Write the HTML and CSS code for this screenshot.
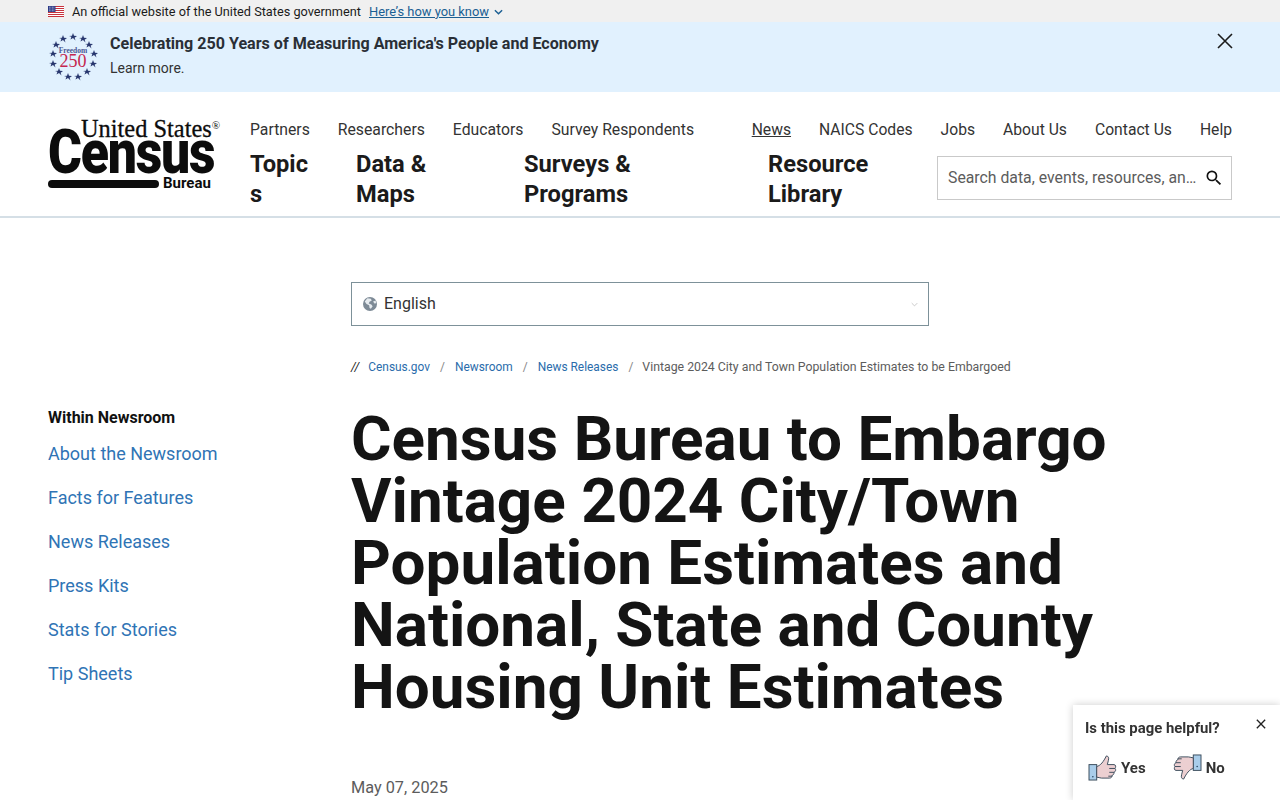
FILE: index.html
```html
<!DOCTYPE html>
<html lang="en">
<head>
<meta charset="utf-8">
<title>Census Bureau to Embargo Vintage 2024 City/Town Population Estimates</title>
<link rel="stylesheet" href="styles.css">
</head>
<body>
<div class="gov-banner">
  <svg class="flag" viewBox="0 0 16 11" width="16" height="11"><rect width="16" height="11" fill="#fff"/><path d="M0 .5h16M0 2.500h16M0 4.500h16M0 6.500h16M0 8.500h16M0 10.500h16" stroke="#c8323c" stroke-width="1"/><rect width="7.500" height="6" fill="#2b3a86"/><path d="M1 1.200h5.500M1 3h5.500M1 4.800h5.500" stroke="#dfe2f2" stroke-width=".8" stroke-dasharray=".8 .7"/></svg>
  <span class="gov-text">An official website of the United States government</span>
  <a class="gov-link" href="#">Here’s how you know</a>
  <svg class="gov-chev" viewBox="0 0 10 6" width="9" height="6"><path d="M1 1l4 4 4-4" fill="none" stroke="#1b5f93" stroke-width="1.600"/></svg>
</div>
<div class="alert">
  <svg class="seal" viewBox="0 0 50 50" width="50" height="50">
    <defs><path id="star" d="M0-4l1 2.800 3 .1-2.400 1.800.9 2.900L0 .9l-2.500 1.700.9-2.900L-4-1.100l3-.1z" fill="#27366e"/></defs>
    <use href="#star" x="25" y="5"/><use href="#star" x="15" y="7"/><use href="#star" x="35" y="7"/><use href="#star" x="8" y="13"/><use href="#star" x="41" y="13"/><use href="#star" x="5" y="22"/><use href="#star" x="46" y="22"/><use href="#star" x="5" y="32"/><use href="#star" x="45" y="32"/><use href="#star" x="11" y="40"/><use href="#star" x="39" y="40"/><use href="#star" x="20" y="45"/><use href="#star" x="30" y="45"/>
    <text class="seal-top" x="25" y="20.500" text-anchor="middle">Freedom</text>
    <text class="seal-num" x="25" y="34.500" text-anchor="middle">250</text>
  </svg>
  <div class="alert-text">
    <strong class="alert-title">Celebrating 250 Years of Measuring America's People and Economy</strong>
    <span class="alert-sub">Learn more.</span>
  </div>
  <svg class="alert-close" viewBox="0 0 16 16" width="16" height="16"><path d="M1 1l14 14M15 1L1 15" stroke="#1b1b1b" stroke-width="1.600" fill="none"/></svg>
</div>
<header class="site-header">
  <a class="logo" href="#">
    <span class="logo-top">United States<sup class="logo-reg">®</sup></span>
    <span class="logo-census">Census</span>
    <span class="logo-bottom"><span class="logo-bar"></span><span class="logo-bureau">Bureau</span></span>
  </a>
  <div class="nav-area">
    <nav class="util-nav">
      <div class="util-group">
        <a href="#">Partners</a><a href="#">Researchers</a><a href="#">Educators</a><a href="#">Survey Respondents</a>
      </div>
      <div class="util-group util-right">
        <a class="underlined" href="#">News</a><a href="#">NAICS Codes</a><a href="#">Jobs</a><a href="#">About Us</a><a href="#">Contact Us</a><a href="#">Help</a>
      </div>
    </nav>
    <div class="main-row">
      <nav class="main-nav">
        <a class="m-topics" href="#">Topics</a>
        <a class="m-data" href="#">Data &amp; Maps</a>
        <a class="m-surveys" href="#">Surveys &amp; Programs</a>
        <a class="m-library" href="#">Resource Library</a>
      </nav>
      <div class="search">
        <span class="search-ph">Search data, events, resources, and more</span>
        <svg viewBox="0 0 24 24" width="20" height="20"><path d="M15.500 14h-.79l-.28-.27A6.470 6.470 0 0 0 16 9.500 6.500 6.500 0 1 0 9.500 16c1.610 0 3.090-.59 4.230-1.570l.27.28v.79l5 4.990L20.490 19l-4.990-5zm-6 0C7.010 14 5 11.990 5 9.500S7.010 5 9.500 5 14 7.010 14 9.500 11.990 14 9.500 14z" fill="#111"/></svg>
      </div>
    </div>
  </div>
</header>
<div class="page">
  <aside class="sidebar">
    <h2 class="side-title">Within Newsroom</h2>
    <ul class="side-list">
      <li><a href="#">About the Newsroom</a></li>
      <li><a href="#">Facts for Features</a></li>
      <li><a href="#">News Releases</a></li>
      <li><a href="#">Press Kits</a></li>
      <li><a href="#">Stats for Stories</a></li>
      <li><a href="#">Tip Sheets</a></li>
    </ul>
  </aside>
  <main class="content">
    <div class="lang">
      <svg viewBox="0 0 16 16" width="14" height="14"><circle cx="8" cy="8" r="8" fill="#7d8a96"/><path d="M5 1.500l4 .5 1 2-2.500 1.500-1 2 3 1 1.500 2-2 3-1.500-1-.5-3-3-1.500-2-3zM11.500 5l3-1 .5 3-2 .5z" fill="#e6ebef"/></svg>
      <span class="lang-name">English</span>
      <svg class="lang-chev" viewBox="0 0 10 6" width="7" height="5"><path d="M1 1l4 4 4-4" fill="none" stroke="#b5b5b5" stroke-width="1"/></svg>
    </div>
    <nav class="crumbs">
      <span class="crumb-start">//</span>
      <a href="#">Census.gov</a><span class="crumb-sep">/</span>
      <a href="#">Newsroom</a><span class="crumb-sep">/</span>
      <a href="#">News Releases</a><span class="crumb-sep">/</span>
      <span class="crumb-cur">Vintage 2024 City and Town Population Estimates to be Embargoed</span>
    </nav>
    <h1 class="title">Census Bureau to Embargo Vintage 2024 City/Town Population Estimates and National, State and County Housing Unit Estimates</h1>
    <p class="date">May 07, 2025</p>
  </main>
</div>
<div class="feedback">
  <div class="fb-head"><span class="fb-q">Is this page helpful?</span>
    <svg viewBox="0 0 12 12" width="10" height="10"><path d="M1 1l10 10M11 1L1 11" stroke="#222" stroke-width="1.600" fill="none"/></svg>
  </div>
  <div class="fb-row">
    <span class="fb-btn">
      <svg viewBox="0 0 30 28" width="29" height="27"><rect x="1" y="11" width="8" height="16" fill="#a9cdea" stroke="#3b4c5c" stroke-width="1"/><circle cx="5" cy="23.500" r=".8" fill="#24425c"/><path d="M9 13c4-1 7-5 10-11 2 0 3 2 2 5l-1 4h7c2 0 2 3 1 4 1 1 1 3-1 4 0 2-1 3-2 3 0 2-1 3-3 3H14c-2 0-3-1-5-1zM22 15h6M22 19h5M21 23h4" fill="#eccfd1" stroke="#3b4c5c" stroke-width="1"/></svg>
      <b>Yes</b>
    </span>
    <span class="fb-btn">
      <svg viewBox="0 0 30 28" width="29" height="27"><rect x="21" y="1" width="8" height="16" fill="#a9cdea" stroke="#3b4c5c" stroke-width="1"/><circle cx="25" cy="13" r=".8" fill="#24425c"/><path d="M21 15c-4 1-7 5-10 11-2 0-3-2-2-5l1-4H3c-2 0-2-3-1-4-1-1-1-3 1-4 0-2 1-3 2-3 0-2 1-3 3-3h8c2 0 3 1 5 1zM8 13H2M8 9H3M9 5H5" fill="#eccfd1" stroke="#3b4c5c" stroke-width="1"/></svg>
      <b>No</b>
    </span>
  </div>
</div>
</body>
</html>
```
FILE: styles.css
```css
* { box-sizing: border-box; }
html, body { margin: 0; padding: 0; overflow: hidden; height: 800px; }
body { font-family: Roboto, "Liberation Sans", sans-serif; color: #1b1b1b; background: #fff; }
a { text-decoration: none; color: inherit; }

.gov-banner { height: 22px; background: #f0f0f0; display: flex; align-items: center; padding-left: 48px; font-size: 12.9px; color: #1b1b1b; }
.flag { margin-right: 8px; }
.gov-text { font-size: 12.72px; }
.gov-link { color: #1b5f93; text-decoration: underline; margin-left: 8px; }
.gov-chev { margin-left: 5px; margin-top: 2px; }

.alert { height: 70px; background: #e1f1fe; display: flex; padding: 10px 47px 0 48px; position: relative; }
.seal { flex: none; }
.seal-top { font-family: "Liberation Serif", serif; font-size: 7.5px; font-weight: 700; fill: #4a5792; }
.seal-num { font-family: "Liberation Serif", serif; font-size: 18px; fill: #c5264f; }
.alert-text { margin-left: 12px; padding-top: 1px; display: flex; flex-direction: column; }
.alert-title { font-size: 16.08px; font-weight: 700; line-height: 22px; color: #2a2f36; }
.alert-sub { font-size: 14px; line-height: 20px; margin-top: 3px; color: #333; }
.alert-close { margin-left: auto; flex: none; margin-top: 1px; }

.site-header { height: 126px; border-bottom: 2px solid #d5dfe6; display: flex; padding: 0 48px; }
.logo { width: 202px; flex: none; padding-top: 27px; color: #0c0c0c; display: block; }
.logo-top { display: block; font-family: "Liberation Serif", serif; font-size: 24.4px; line-height: 20px; padding-left: 33px; white-space: nowrap; -webkit-text-stroke: .3px #0c0c0c; }
.logo-reg { font-size: 11px; vertical-align: 8px; line-height: 0; -webkit-text-stroke: 0; }
.logo-census { display: block; font-family: Roboto, sans-serif; font-weight: 900; font-size: 62px; line-height: 38px; letter-spacing: -1.5px; margin-top: -6px; transform: scaleX(.835); transform-origin: left center; white-space: nowrap; }
.logo-bottom { display: flex; align-items: flex-start; margin-top: 5px; }
.logo-bar { display: block; width: 111px; height: 8px; margin-top: 4px; border-radius: 4px; background: #0c0c0c; }
.logo-bureau { margin-left: 4px; margin-top: -1px; font-size: 15px; font-weight: 700; line-height: 16px; }

.nav-area { flex: 1; display: flex; flex-direction: column; }
.util-nav { display: flex; justify-content: space-between; padding-top: 28px; font-size: 15.75px; line-height: 19px; color: #333; }
.util-group { display: flex; gap: 28px; }
.util-right { font-size: 15.68px; }
.underlined { text-decoration: underline; }
.main-row { display: flex; justify-content: space-between; margin-top: 10px; }
.main-nav { display: flex; font-size: 23.7px; font-weight: 700; line-height: 30px; color: #1b1b1b; }
.main-nav a { display: block; }
.m-topics { width: 60px; margin-right: 46px; overflow-wrap: anywhere; }
.m-data { width: 100px; margin-right: 68px; }
.m-surveys { width: 150px; margin-right: 94px; }
.m-library { width: 120px; }
.search { width: 295px; height: 44px; margin-top: 7px; border: 1px solid #c9c9c9; display: flex; align-items: center; padding: 0 7px 0 10px; gap: 6px; color: #5c5c5c; }
.search-ph { flex: 1; min-width: 0; white-space: nowrap; overflow: hidden; text-overflow: ellipsis; font-size: 15.8px; line-height: 20px; margin-top: -1px; }
.search svg { flex: none; }

.page { display: flex; padding-left: 48px; }
.sidebar { width: 303px; flex: none; padding-top: 190px; }
.side-title { margin: 0; font-size: 16px; font-weight: 700; line-height: 19px; color: #111; }
.side-list { list-style: none; margin: 10px 0 0; padding: 0; font-size: 18px; color: #2f74b5; }
.side-list li { height: 44px; line-height: 22px; padding-top: 6px; }
.content { width: 800px; padding-top: 64px; }
.lang { width: 578px; height: 44px; border: 1px solid #7d9199; display: flex; align-items: center; padding: 0 10px 0 11px; font-size: 16px; line-height: 18px; color: #333; }
.lang-name { margin-left: 7px; margin-top: -1px; }
.lang-chev { margin-left: auto; }
.crumbs { margin-top: 33px; display: flex; align-items: center; font-size: 11.9px; line-height: 16px; color: #2a6cab; }
.crumb-start { color: #222; font-style: italic; margin-right: 9px; font-size: 12px; }
.crumb-sep { color: #888; margin: 0 10px; font-size: 12px; }
.crumb-cur { color: #5c5c5c; font-size: 12.3px; margin-left: -1px; }
.title { margin: 33px 0 0; font-size: 62px; line-height: 62px; font-weight: 700; color: #141414; }
.date { margin: 60px 0 0; font-size: 16.3px; line-height: 20px; color: #5c5c5c; }

.feedback { position: fixed; left: 1073px; top: 705px; width: 207px; height: 95px; background: #fff; box-shadow: 0 0 8px rgba(0,0,0,.2); padding: 14px 14px 0 12px; }
.fb-head { display: flex; justify-content: space-between; align-items: flex-start; }
.fb-q { font-size: 14.9px; font-weight: 700; line-height: 18px; color: #333; }
.fb-row { display: flex; gap: 27px; margin-top: 17px; padding-left: 3px; }
.fb-btn { display: flex; align-items: center; gap: 4px; font-size: 15px; color: #333; }
```
